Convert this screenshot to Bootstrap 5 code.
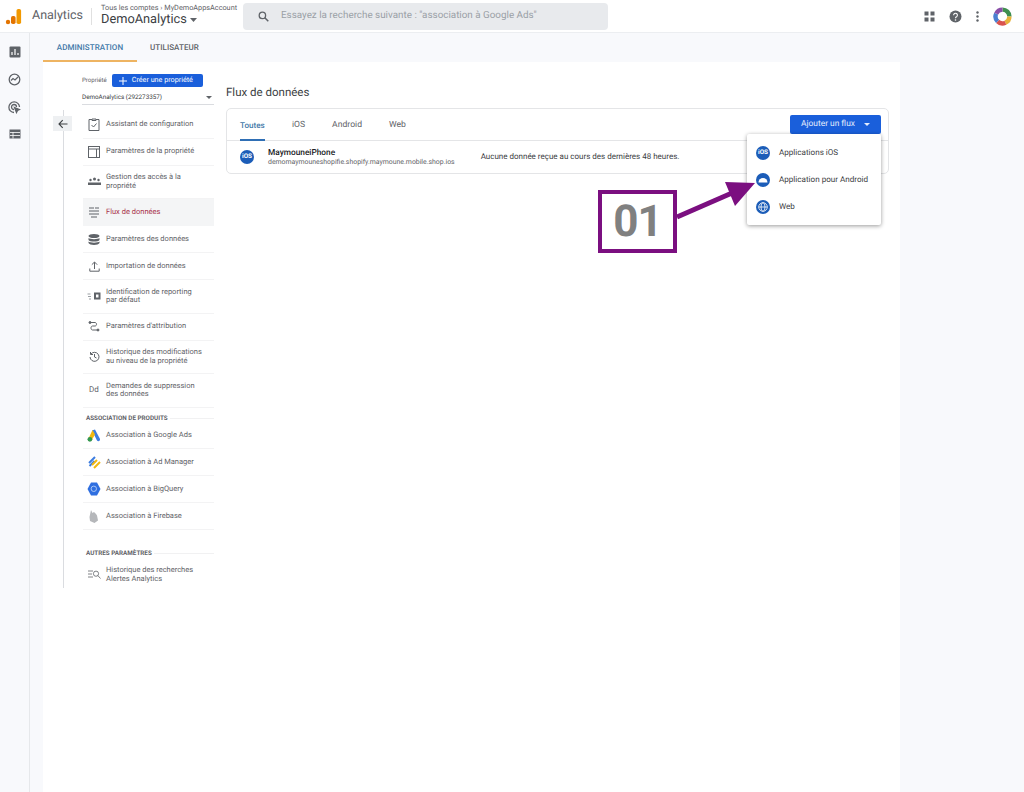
<!DOCTYPE html>
<html lang="fr">
<head>
<meta charset="UTF-8">
<title>Analytics - Flux de données</title>
<link rel="stylesheet" href="https://cdn.jsdelivr.net/npm/bootstrap@5.3.0/dist/css/bootstrap.min.css">
<style>
html, body { height: 792px; overflow: hidden; }
body { background: #f8f9fc; font-family: Roboto, "Liberation Sans", sans-serif; color: #5f6368; font-size: 8px; position: relative; text-rendering: geometricPrecision; }
.top-bar { height: 33px; background: #fff; border-bottom: 1px solid #eceef1; padding-left: 5px; }
.logo-name { font-size: 12.5px; color: #5f6368; margin-left: 10px; width: 52px; }
.top-sep { width: 1px; height: 17px; background: #e0e0e0; margin: 0 9px 0 7px; }
.acct-col { width: 136px; flex: none; }
.crumb { font-size: 7.3px; line-height: 8px; color: #5f6368; white-space: nowrap; }
.acct { font-size: 12.8px; line-height: 16px; color: #3c4043; white-space: nowrap; }
.search-box { width: 365px; height: 27px; background: #e8eaed; border-radius: 4px; margin-left: 6px; padding-left: 15px; font-size: 9.85px; color: #9aa0a6; gap: 12px; flex: none; }
.top-icons { margin-left: auto; gap: 14px; padding-right: 12px; }
.rail { width: 30px; height: 759px; border-right: 1px solid #e6e8eb; padding-top: 13px; gap: 15px; flex: none; }
.admin-tabs { height: 29px; padding-left: 13px; }
.admin-tab { font-size: 8px; font-weight: 500; height: 29px; line-height: 29px; letter-spacing: .05px; color: #5f6368; }
.admin-tab.on { width: 94px; text-align: center; color: #3f78a8; border-bottom: 2px solid #eeb462; }
.admin-tab.off { margin-left: 13px; }
.panel { width: 857px; height: 730px; background: #fff; margin-left: 13px; }
.back-col { width: 40px; flex: none; }
.rail-line { position: absolute; left: 20px; top: 48px; height: 478px; width: 1px; background: #dadce0; }
.back-btn { position: absolute; left: 10px; top: 54px; width: 19px; height: 15px; background: #eef0f2; }
.side-nav { width: 131px; flex: none; padding-top: 12px; }
.make-line { height: 13px; font-size: 6.1px; gap: 5px; margin-bottom: 4px; margin-left: -1px; }
.make-btn { background: #1a5fdb; color: #fff; border-radius: 2px; width: 91px; height: 13px; font-size: 7.2px; gap: 5px; padding-left: 7px; }
.prop-pick { height: 14px; font-size: 6.3px; color: #3c4043; border-bottom: 1px solid #dadce0; margin-left: -1px; padding-right: 2px; margin-bottom: 6.5px; }
.nav-row { border-bottom: 1px solid #f3f3f4; font-size: 7.5px; line-height: 8.5px; color: #5f6368; padding-left: 4px; }
.nav-row .ico { width: 14px; height: 14px; margin-right: 5px; flex: none; display: flex; align-items: center; justify-content: center; }
.nav-row.h27 { height: 27px; }
.nav-row.h33 { height: 33.5px; }
.nav-row.on { background: #f4f5f6; color: #a8324a; border-bottom: 0; }
.group-head { font-size: 6.3px; font-weight: 700; color: #5f6368; margin-top: 6.5px; line-height: 8px; padding-left: 3px; white-space: nowrap; gap: 2px; }
.group-head.later { margin-top: 19px; margin-bottom: 4px; }
.group-head span { flex: none; }
.group-head i { display: block; height: 1px; background: #f1f1f2; flex: 1; }
.dd-text { font-size: 8px; }
.stream-col { width: 663px; margin-left: 12px; flex: none; }
.stream-title { font-size: 11.5px; color: #3c4043; line-height: 15px; margin: 23px 0 8px; }
.stream-card { border: 1px solid #e4e5e7; border-radius: 5px; height: 66px; background: #fff; }
.stream-tabs { height: 32px; border-bottom: 1px solid #e4e5e7; padding-left: 13px; font-size: 8.6px; }
.stream-tab { height: 32px; line-height: 32px; margin-right: 27px; color: #5f6368; }
.stream-tab.on { color: #3f78a8; border-bottom: 2px solid #2f6fb5; width: 25px; font-weight: 500; font-size: 8.1px; }
.add-btn { width: 91px; height: 19px; background: #1a5fdb; border-radius: 2px; color: #e6eefc; font-size: 8.4px; margin-left: auto; margin-right: 7px; gap: 9px; }
.stream-row { height: 32px; padding-left: 13px; }
.app-round { width: 14px; height: 14px; border-radius: 50%; background: #1c5db8; color: #fff; font-size: 6.4px; font-weight: 700; flex: none; }
.stream-name { font-size: 8.3px; font-weight: 500; color: #202124; line-height: 9px; }
.stream-id { font-size: 6.9px; color: #5f6368; line-height: 8px; }
.stream-msg { font-size: 8px; color: #3c4043; margin-left: 26px; }
.stream-icon { margin-right: 14px; }
.add-menu { position: absolute; left: 747px; top: 134px; width: 134px; height: 91px; background: #fff; border-radius: 2px; box-shadow: 0 1px 4px rgba(0,0,0,.4); padding-top: 5px; }
.add-item { height: 27px; padding-left: 9px; gap: 9px; font-size: 8.1px; color: #3c4043; }
.step-box { position: absolute; left: 598px; top: 190px; width: 79px; height: 63px; border: 4px solid #7b0f80; color: #808080; font-family: Roboto, sans-serif; font-size: 44px; font-weight: 700; line-height: 55px; letter-spacing: -1px; text-align: center; background: #fff; }
.step-arrow { position: absolute; left: 670px; top: 175px; }
</style>
</head>
<body>
<div class="top-bar d-flex align-items-center">
  <svg width="17" height="17" viewBox="0 0 17 17"><rect x="11.5" y="1" width="4.6" height="15" rx="1.8" fill="#f29900"/><rect x="6" y="8" width="4.6" height="8" rx="1.8" fill="#e37400"/><circle cx="3" cy="14" r="2.2" fill="#e37400"/></svg>
  <div class="logo-name">Analytics</div>
  <div class="top-sep"></div>
  <div class="acct-col">
    <div class="crumb">Tous les comptes &#8250; MyDemoAppsAccount</div>
    <div class="acct">DemoAnalytics <svg width="7" height="4" viewBox="0 0 7 4"><path d="M0 0h7L3.500 4z" fill="#5f6368"/></svg></div>
  </div>
  <div class="search-box d-flex align-items-center">
    <svg width="11" height="11" viewBox="0 0 11 11"><circle cx="4.400" cy="4.400" r="3.200" fill="none" stroke="#5f6368" stroke-width="1.300"/><path d="M6.800 6.800L10.300 10.300" stroke="#5f6368" stroke-width="1.500"/></svg>
    <span>Essayez la recherche suivante : "association à Google Ads"</span>
  </div>
  <div class="top-icons d-flex align-items-center">
    <svg width="11" height="11" viewBox="0 0 11 11" fill="#5f6368"><rect x=".5" y=".5" width="4" height="4"/><rect x="6.500" y=".5" width="4" height="4"/><rect x=".5" y="6.500" width="4" height="4"/><rect x="6.500" y="6.500" width="4" height="4"/></svg>
    <svg width="13" height="13" viewBox="0 0 13 13"><circle cx="6.500" cy="6.500" r="6" fill="#5f6368"/><path d="M4.600 5.200a1.900 1.900 0 1 1 2.900 1.600c-.7.4-1 .7-1 1.400" fill="none" stroke="#fff" stroke-width="1.100"/><circle cx="6.500" cy="10" r=".8" fill="#fff"/></svg>
    <svg width="3" height="11" viewBox="0 0 3 11" fill="#5f6368"><circle cx="1.500" cy="1.500" r="1.200"/><circle cx="1.500" cy="5.500" r="1.200"/><circle cx="1.500" cy="9.500" r="1.200"/></svg>
    <svg width="19" height="19" viewBox="0 0 19 19" fill="none" stroke-width="4.400"><path d="M9.500 2.600a6.900 6.900 0 0 1 6.900 6.900" stroke="#3f8f4f"/><path d="M16.400 9.500a6.900 6.900 0 0 1-4 6.300" stroke="#e8b23a"/><path d="M12.400 15.800a6.900 6.900 0 0 1-7.800-1.400" stroke="#d9534f"/><path d="M4.600 14.400a6.900 6.900 0 0 1-1.400-7.800" stroke="#4a7fd0"/><path d="M3.200 6.600a6.900 6.900 0 0 1 6.300-4" stroke="#8a4fa8"/></svg>
  </div>
</div>
<div class="d-flex">
  <div class="rail d-flex flex-column align-items-center">
    <svg width="12" height="12" viewBox="0 0 12 12"><rect x=".5" y=".5" width="11" height="11" rx="1" fill="#5f6368"/><path d="M3 9V6M6 9V3M9 9V7" stroke="#fff" stroke-width="1.200"/></svg>
    <svg width="13" height="13" viewBox="0 0 13 13" fill="none" stroke="#5f6368" stroke-width="1.300"><circle cx="6.500" cy="6.500" r="5.300"/><path d="M3 7.500l2-2 2 1.500 3-3"/></svg>
    <svg width="13" height="13" viewBox="0 0 13 13" fill="none" stroke="#5f6368" stroke-width="1.300"><path d="M6 11.500a5.300 5.300 0 1 1 5.500-5.500"/><path d="M6 8.500A2.500 2.500 0 1 1 8.500 6"/><path d="M6.500 6.500l5 2-2 1-1 2z" fill="#5f6368"/></svg>
    <svg width="12" height="10" viewBox="0 0 12 10"><rect x=".5" y=".5" width="11" height="9" fill="#5f6368"/><path d="M1 3.500h10M1 6.500h10M4 3v6.500" stroke="#fff" stroke-width=".8"/></svg>
  </div>
  <div class="flex-grow-1">
    <div class="admin-tabs d-flex">
      <div class="admin-tab on">ADMINISTRATION</div>
      <div class="admin-tab off">UTILISATEUR</div>
    </div>
    <div class="panel d-flex position-relative">
      <div class="rail-line"></div>
      <div class="back-btn d-flex align-items-center justify-content-center">
        <svg width="10" height="10" viewBox="0 0 10 10" fill="none" stroke="#3c4043" stroke-width="1.100"><path d="M9.500 5H1M4.700 1.200L1 5l3.700 3.800"/></svg>
      </div>
      <div class="back-col"></div>
      <div class="side-nav">
        <div class="make-line d-flex align-items-center">
          <span>Propriété</span>
          <div class="make-btn d-flex align-items-center"><svg width="8" height="8" viewBox="0 0 8 8"><path d="M4 0v8M0 4h8" stroke="#fff" stroke-width="1"/></svg><span>Créer une propriété</span></div>
        </div>
        <div class="prop-pick d-flex align-items-center justify-content-between">
          <span>DemoAnalytics (292273357)</span>
          <svg width="6" height="3" viewBox="0 0 6 3"><path d="M0 0h6L3 3z" fill="#5f6368"/></svg>
        </div>
        <div class="nav-row h27 d-flex align-items-center"><span class="ico"><svg width="12" height="13" viewBox="0 0 12 13" fill="none" stroke="#5f6368"><path d="M4 1.500H1v11h10v-11H8M4 1h4v1.500H4z"/><path d="M3.500 7l2 2 3-3.500"/></svg></span>Assistant de configuration</div>
        <div class="nav-row h27 d-flex align-items-center"><span class="ico"><svg width="12" height="12" viewBox="0 0 12 12" fill="none" stroke="#5f6368"><rect x=".5" y=".5" width="11" height="11"/><path d="M.5 3h11M8.500 3v8.500"/></svg></span>Paramètres de la propriété</div>
        <div class="nav-row h33 d-flex align-items-center"><span class="ico"><svg width="13" height="9" viewBox="0 0 13 9" fill="#5f6368"><circle cx="2.500" cy="3" r="1.200"/><circle cx="6.500" cy="2" r="1.500"/><circle cx="10.500" cy="3" r="1.200"/><path d="M0 5.500h13V8H0z"/></svg></span><span>Gestion des accès à la<br>propriété</span></div>
        <div class="nav-row h27 on d-flex align-items-center"><span class="ico"><svg width="12" height="11" viewBox="0 0 12 11" fill="none" stroke="#5f6368"><path d="M1 1h3M7 1h4M1 4h6M9 4h2M1 7h2M5 7h6M3 10h6"/><path d="M5 0v2M8 3v2M4 6v2"/></svg></span>Flux de données</div>
        <div class="nav-row h27 d-flex align-items-center"><span class="ico"><svg width="12" height="11" viewBox="0 0 12 11" fill="#5f6368"><ellipse cx="6" cy="2" rx="5.500" ry="2"/><path d="M.5 4c1 1.500 10 1.500 11 0v2c-1 2-10 2-11 0zM.5 7.500c1 1.500 10 1.500 11 0V9c-1 2.600-10 2.600-11 0z"/></svg></span>Paramètres des données</div>
        <div class="nav-row h27 d-flex align-items-center"><span class="ico"><svg width="11" height="11" viewBox="0 0 11 11" fill="none" stroke="#5f6368"><path d="M5.500 8V1.200M2.800 3.700L5.500 1l2.700 2.700M.8 7.500v2.700h9.400V7.500"/></svg></span>Importation de données</div>
        <div class="nav-row h33 d-flex align-items-center"><span class="ico"><svg width="14" height="8" viewBox="0 0 14 8"><path d="M.5 2h3M1 4.500h3M2 7h2" stroke="#80868b" stroke-width=".8"/><rect x="7" y=".5" width="6.500" height="7" fill="#5f6368"/><rect x="9" y="2.500" width="2.500" height="3" fill="#fff"/></svg></span><span>Identification de reporting<br>par défaut</span></div>
        <div class="nav-row h27 d-flex align-items-center"><span class="ico"><svg width="12" height="11" viewBox="0 0 12 11" fill="none" stroke="#5f6368"><path d="M2 1.500h5c2 0 2 3.500 0 3.500H4.500c-2 0-2 4 0 4h5"/><circle cx="2" cy="1.500" r="1" fill="#5f6368"/><circle cx="10" cy="9" r="1" fill="#5f6368"/></svg></span>Paramètres d'attribution</div>
        <div class="nav-row h33 d-flex align-items-center"><span class="ico"><svg width="11" height="11" viewBox="0 0 11 11" fill="none" stroke="#5f6368"><path d="M2 3a4.500 4.500 0 1 1-1 3M1.500 1v2.500H4M5.500 3v3l2 1"/></svg></span><span>Historique des modifications<br>au niveau de la propriété</span></div>
        <div class="nav-row h33 d-flex align-items-center"><span class="ico dd-text">Dd</span><span>Demandes de suppression<br>des données</span></div>
        <div class="group-head d-flex align-items-center"><span>ASSOCIATION DE PRODUITS</span><i></i></div>
        <div class="nav-row h27 d-flex align-items-center"><span class="ico"><svg width="14" height="13" viewBox="0 0 14 13"><path d="M5 1.500L8 0.500l5 9.500c.5 2-2 3-3 1.500z" fill="#3d7de0"/><path d="M5.500 1L8 5.500 4.500 11.500 1.500 9.500z" fill="#f2b90f"/><circle cx="2.900" cy="10.300" r="2.400" fill="#34984f"/></svg></span>Association à Google Ads</div>
        <div class="nav-row h27 d-flex align-items-center"><span class="ico"><svg width="13" height="13" viewBox="0 0 13 13" fill="none" stroke-width="2"><path d="M1 7l6-6" stroke="#3d7de0"/><path d="M1.500 10l5-5" stroke="#3d7de0"/><path d="M6 12l6-6" stroke="#f2b90f"/><path d="M4 9l5-5" stroke="#f2b90f"/></svg></span>Association à Ad Manager</div>
        <div class="nav-row h27 d-flex align-items-center"><span class="ico"><svg width="14" height="14" viewBox="0 0 14 14"><path d="M4 .5h6L13.500 7 10 13.500H4L.5 7z" fill="#2f6fe0"/><circle cx="6.800" cy="6.800" r="2.700" fill="none" stroke="#a9c6f5"/></svg></span>Association à BigQuery</div>
        <div class="nav-row h27 d-flex align-items-center"><span class="ico"><svg width="10" height="13" viewBox="0 0 10 13"><path d="M2 0l1.500 3L5 2l2 2 1 1.500 1 5L5.500 13 1 11l-.5-4z" fill="#b5b7ba"/></svg></span>Association à Firebase</div>
        <div class="group-head later d-flex align-items-center"><span>AUTRES PARAMÈTRES</span><i></i></div>
        <div class="nav-row h27 d-flex align-items-center border-0"><span class="ico"><svg width="13" height="9" viewBox="0 0 13 9" fill="none" stroke="#5f6368" stroke-width=".8"><path d="M0 1h5M0 4h4M0 7h5"/><circle cx="8" cy="3.700" r="2.600"/><path d="M9.800 5.500L12.500 8.500"/></svg></span><span>Historique des recherches<br>Alertes Analytics</span></div>
      </div>
      <div class="stream-col">
        <div class="stream-title">Flux de données</div>
        <div class="stream-card">
          <div class="stream-tabs d-flex align-items-center">
            <div class="stream-tab on">Toutes</div>
            <div class="stream-tab">iOS</div>
            <div class="stream-tab">Android</div>
            <div class="stream-tab">Web</div>
            <div class="add-btn d-flex align-items-center justify-content-center"><span>Ajouter un flux</span><svg width="6" height="3" viewBox="0 0 6 3"><path d="M0 0h6L3 3z" fill="#e6eefc"/></svg></div>
          </div>
          <div class="stream-row d-flex align-items-center">
            <div class="app-round stream-icon d-flex align-items-center justify-content-center">iOS</div>
            <div>
              <div class="stream-name">MaymouneiPhone</div>
              <div class="stream-id">demomaymouneshopifie.shopify.maymoune.mobile.shop.ios</div>
            </div>
            <div class="stream-msg">Aucune donnée reçue au cours des dernières 48 heures.</div>
          </div>
        </div>
      </div>
    </div>
  </div>
</div>

<div class="add-menu">
  <div class="add-item d-flex align-items-center"><div class="app-round d-flex align-items-center justify-content-center">iOS</div>Applications iOS</div>
  <div class="add-item d-flex align-items-center"><div class="app-round d-flex align-items-center justify-content-center"><svg width="10" height="6" viewBox="0 0 10 6"><path d="M.5 5.500a4.500 4.500 0 0 1 9 0z" fill="#fff"/></svg></div>Application pour Android</div>
  <div class="add-item d-flex align-items-center"><div class="app-round d-flex align-items-center justify-content-center"><svg width="10" height="10" viewBox="0 0 10 10" fill="none" stroke="#fff" stroke-width=".8"><circle cx="5" cy="5" r="4.300"/><ellipse cx="5" cy="5" rx="2" ry="4.300"/><path d="M.7 5h8.600"/></svg></div>Web</div>
</div>

<svg class="step-arrow" width="90" height="50" viewBox="0 0 90 50"><path d="M7 42L62 18" stroke="#7b0f80" stroke-width="5"/><path d="M85 8L55 7 65 31z" fill="#7b0f80"/></svg>
<div class="step-box">01</div>
</body>
</html>
